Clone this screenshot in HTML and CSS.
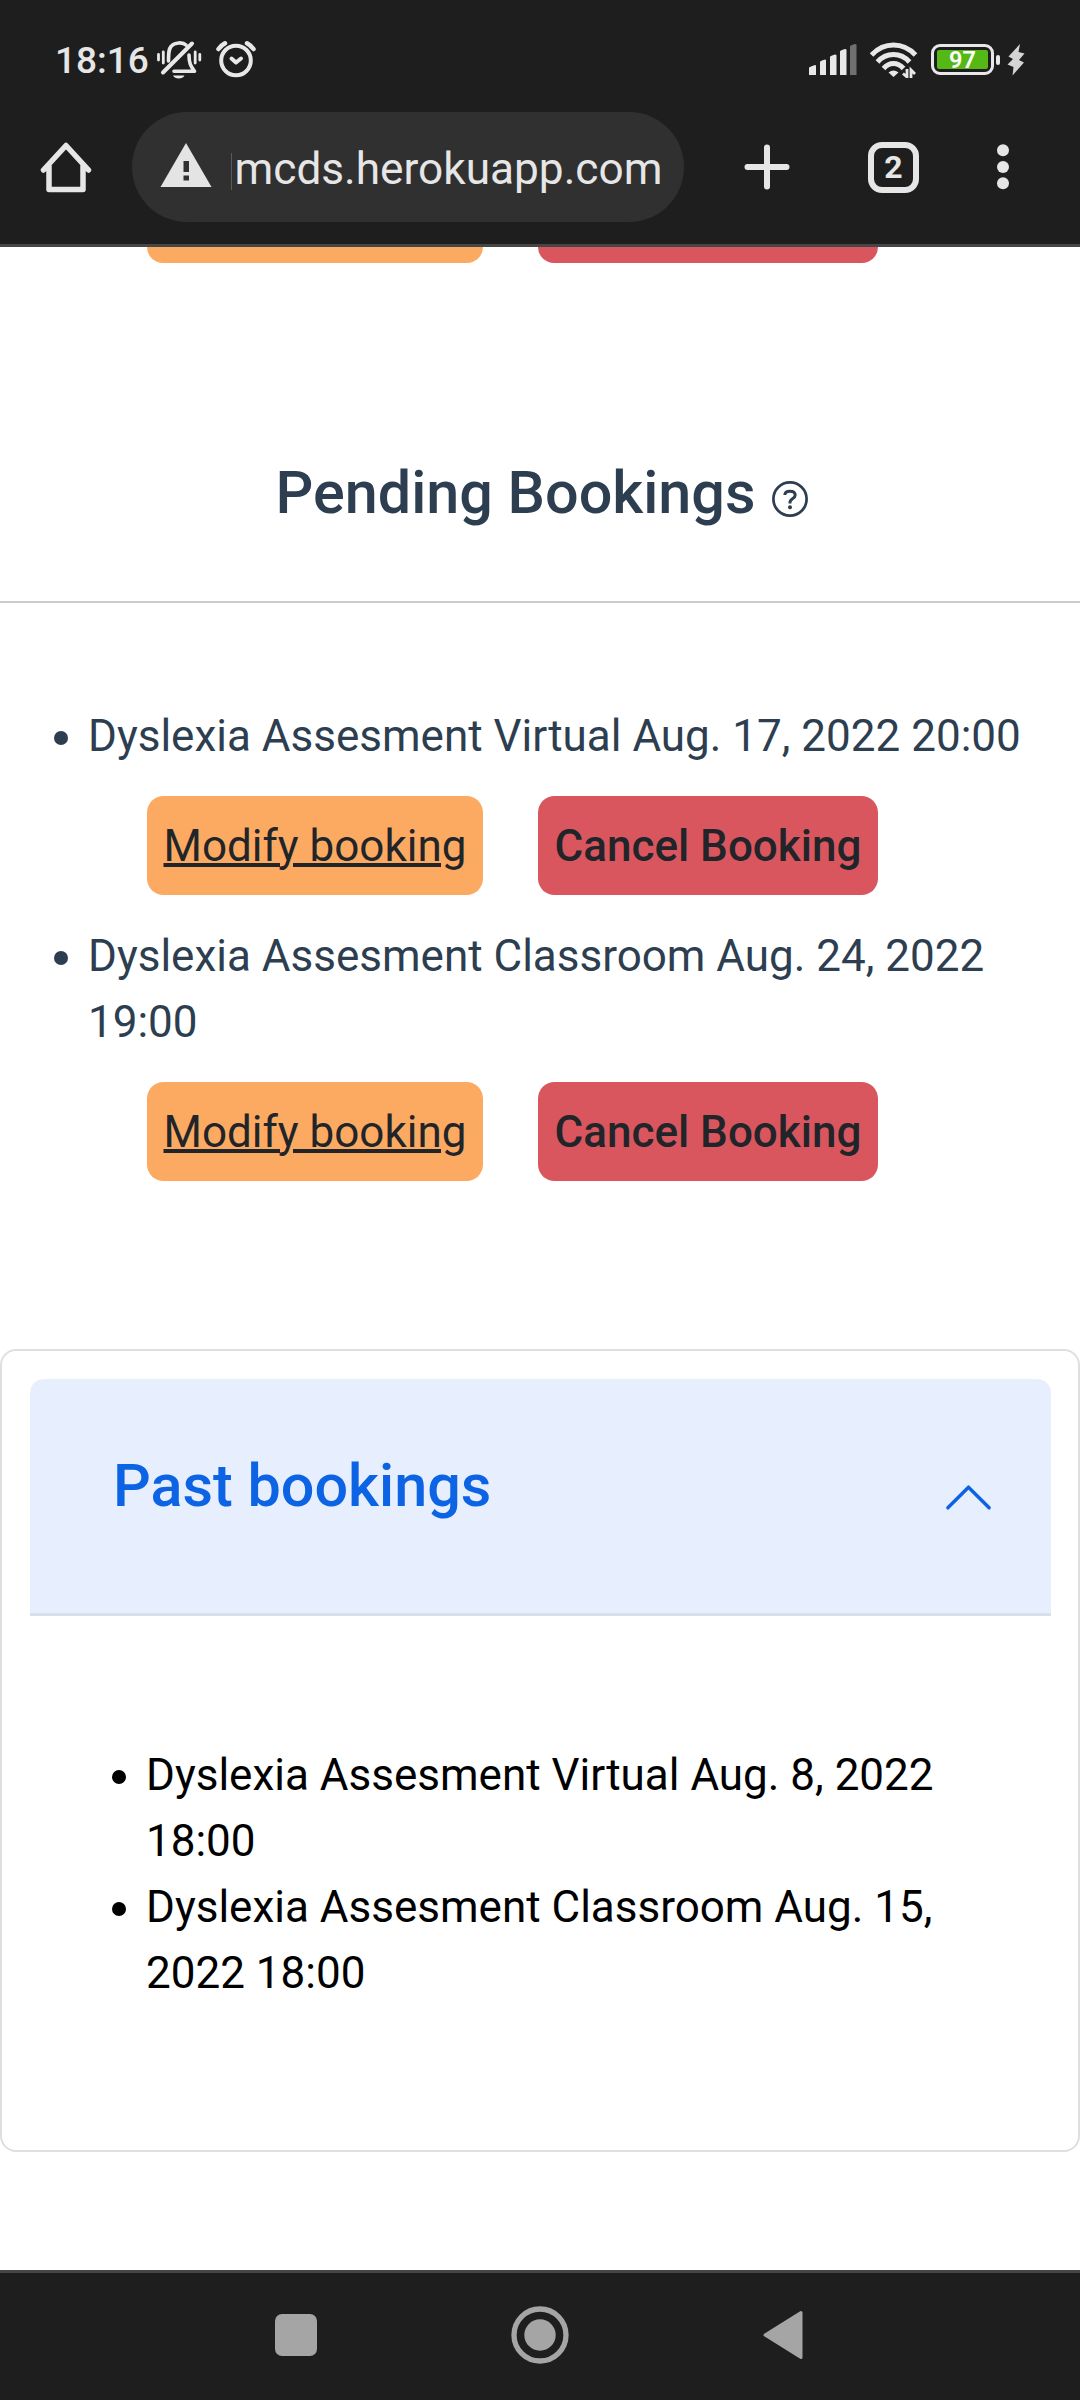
FILE: index.html
```html
<!DOCTYPE html>
<html lang="en">
<head>
<meta charset="utf-8">
<title>Bookings</title>
<link rel="stylesheet" href="styles.css">
</head>
<body>
<header class="chrome">
  <div class="status">
    <span class="clock">18:16</span>
    <svg class="bell" width="46" height="40" viewBox="0 0 46 40" fill="none" stroke="#e8e8e8" stroke-width="3.6" stroke-linecap="round">
      <path d="M30 5C27 2 18.500 2 15 6.500C12.500 9.500 12.700 13 12.500 21"/>
      <path d="M33 15C33 23 34.500 26 38.500 31.300H18" stroke-linejoin="round"/>
      <path d="M36 3.500L7 32.500" stroke-width="4"/>
      <path d="M17 35.500H28.500C27 39.500 18.500 39.500 17 35.500Z" fill="#e8e8e8" stroke="none"/>
      <path d="M2.500 14.500V20M7.300 12V23M39.200 12V23M43.800 14.500V20" stroke-width="2.800"/>
    </svg>
    <svg class="alarm" width="40" height="38" viewBox="0 0 40 38" fill="none" stroke="#e8e8e8" stroke-linecap="round">
      <circle cx="20" cy="20.500" r="14.800" stroke-width="4"/>
      <path d="M2.500 9Q5 5.500 9 3.300M37.500 9Q35 5.500 31 3.300" stroke-width="4.500"/>
      <path d="M15.500 18.500L20 22.500L25 18.500" stroke-width="4" stroke-linejoin="round"/>
    </svg>
    <svg class="signal" width="48" height="34" viewBox="0 0 48 34" fill="#e8e8e8">
      <path d="M0 26Q0 25 2 24.500L6 23Q7 23 7 24V33H0ZM11 20Q11 19 13 18.500L16 17.500Q17 17.500 17 18.500V33H11ZM21 15Q21 14 23 13.500L26 12.500Q27.500 12.500 27.500 13.500V33H21ZM31 9.500Q31 8.500 33 8L36 7Q37.500 7 37.500 8V33H31Z"/>
      <path d="M41 4.500Q41 3.500 43 3L46 2Q47.500 2 47.500 3V33H41Z" fill="#707070"/>
    </svg>
    <svg class="wifi" width="48" height="38" viewBox="0 0 48 38" fill="none" stroke="#e8e8e8" stroke-width="5">
      <path d="M1.500 15Q11 5 23.500 5T45.500 15"/>
      <path d="M7.500 22Q14 14.500 23.500 14.500T39.500 22"/>
      <path d="M13.500 28.500Q18 23.500 23.500 23.500T33.500 28.500"/>
      <path d="M18.500 32.500Q23.500 28.500 28.500 32.500L23.500 37Z" fill="#e8e8e8" stroke="none"/>
      <path d="M37 29V37L33 33.500M41 38V30L45 34" stroke-width="2.800"/>
    </svg>
    <span class="battery"><span class="charge">97</span></span>
    <span class="nub"></span>
    <svg class="bolt" width="18" height="32" viewBox="0 0 18 32"><path d="M13 0L1.500 12.500L6 15L0.500 20.500L6.500 23L5.500 31.500L17 18.500L12 16L17.500 9.500L11.500 8Z" fill="#d4d4d4"/></svg>
  </div>
  <div class="toolbar">
    <svg class="home" width="52" height="52" viewBox="0 0 52 52" fill="none" stroke="#e6e6e6" stroke-width="5.500" stroke-linecap="round" stroke-linejoin="round"><path d="M3.500 29L26 4.500L48.500 29M9 25V48.500H43V25"/></svg>
    <div class="address">
      <svg class="warning" width="52" height="46" viewBox="0 0 52 46"><path d="M26 1L51.500 45H0.500Z" fill="#e4e4e4"/><path d="M23.500 19H29V30H23.500ZM23.500 33.500H29V38.500H23.500Z" fill="#303030"/></svg>
      <span class="caret"></span>
      <span class="url">mcds.herokuapp.com</span>
    </div>
    <svg class="plus" width="46" height="46" viewBox="0 0 46 46" stroke="#e6e6e6" stroke-width="6" stroke-linecap="round"><path d="M23 3.500V42.500M3.500 23H42.500"/></svg>
    <span class="tabs">2</span>
    <svg class="dots" width="12" height="46" viewBox="0 0 12 46" fill="#e6e6e6"><circle cx="6" cy="6.300" r="6"/><circle cx="6" cy="23" r="6"/><circle cx="6" cy="39.300" r="6"/></svg>
  </div>
</header>
<main class="page">
  <div class="actions cut"><span class="btn modify"></span><span class="btn cancel"></span></div>
  <h4 class="title">Pending Bookings
    <svg class="help" width="36" height="36" viewBox="0 0 36 36" fill="none" stroke="#2c3e50"><circle cx="18" cy="18" r="16.600" stroke-width="2.700"/><path d="M12.800 14Q13 10.300 18 10.300T23.200 14Q23.200 16 20.500 17.700T18 21.500V22.500" stroke-width="3"/><circle cx="18" cy="26.300" r="2" fill="#2c3e50" stroke="none"/></svg>
  </h4>
  <ul class="pending">
    <li><p>Dyslexia Assesment Virtual Aug. 17, 2022 20:00</p>
      <div class="actions"><a class="btn modify">Modify booking</a><span class="btn cancel">Cancel Booking</span></div></li>
    <li><p>Dyslexia Assesment Classroom Aug. 24, 2022<br>19:00</p>
      <div class="actions"><a class="btn modify">Modify booking</a><span class="btn cancel">Cancel Booking</span></div></li>
  </ul>
  <section class="card">
    <div class="card-head">
      <h4 class="card-title">Past bookings</h4>
      <svg class="chevron" width="55" height="55" viewBox="0 0 16 16" fill="none" stroke="#0c63e4" stroke-linecap="round" stroke-linejoin="round"><path d="M2 11L8 5L14 11"/></svg>
    </div>
    <ul class="past">
      <li><p>Dyslexia Assesment Virtual Aug. 8, 2022<br>18:00</p></li>
      <li><p>Dyslexia Assesment Classroom Aug. 15,<br>2022 18:00</p></li>
    </ul>
  </section>
</main>
<nav class="nav">
  <span class="recent"></span>
  <svg width="58" height="58" viewBox="0 0 58 58"><circle cx="29" cy="29" r="26" fill="none" stroke="#a5a5a5" stroke-width="5.300"/><circle cx="29" cy="29" r="15.700" fill="#a5a5a5"/></svg>
  <svg class="back" width="40" height="50" viewBox="0 0 40 50"><path d="M2 25L38 2.500V47.500Z" fill="#a5a5a5" stroke="#a5a5a5" stroke-width="3" stroke-linejoin="round"/></svg>
</nav>
</body>
</html>
```
FILE: styles.css
```css
* { box-sizing: border-box; margin: 0; padding: 0; }
body {
  display: flex; flex-direction: column;
  width: 1080px; height: 2400px; overflow: hidden;
  background: #fff; color: #2c3e50;
  font: 400 44px/66px Roboto, sans-serif;
}
svg { display: block; flex: none; }

/* Status bar and browser toolbar */
.chrome { flex: none; height: 247px; background: #1e1e1e; border-bottom: 3px solid #464646; color: #e6e6e6; }
.status { display: flex; align-items: flex-start; height: 112px; padding: 40px 0 0 55px; }
.clock { width: 101px; font-size: 37px; font-weight: 500; line-height: 41px; white-space: nowrap; }
.alarm { margin-left: 14px; }
.signal { margin: 2px 0 0 553px; }
.wifi { margin-left: 13px; }
.battery { width: 63px; height: 31px; margin: 4px 0 0 13px; padding: 3px; border: 3.500px solid #e8e8e8; border-radius: 9px; }
.charge { display: block; height: 19px; border-radius: 2px; background: #55b815; color: #fff; font-size: 23.500px; font-weight: 600; line-height: 20px; text-align: center; }
.nub { width: 4px; height: 10px; margin: 15px 0 0 2px; border-radius: 2px; background: #e8e8e8; }
.bolt { margin: 4px 0 0 7px; }
.toolbar { display: flex; align-items: center; height: 110px; padding-left: 40px; }
.address { display: flex; align-items: center; width: 552px; height: 110px; margin-left: 40px; padding-left: 28px; border-radius: 55px; background: #303030; }
.warning { margin-top: -4px; }
.caret { width: 1px; height: 37px; margin: 8px 0 0 19px; background: #5a5a5a; }
.url { margin: 3px 0 0 2.500px; font-size: 44.200px; white-space: nowrap; }
.plus { margin-left: 60px; }
.tabs { width: 51px; height: 51px; margin-left: 78px; border: 6.500px solid #e6e6e6; border-radius: 14px; font-size: 32px; font-weight: 700; line-height: 39px; text-align: center; }
.dots { margin-left: 78px; }

/* Bookings */
.page { flex: 1; display: flex; flex-direction: column; }
.actions { display: flex; gap: 55px; }
.btn { height: 99px; padding: 16.500px; border-radius: 16.500px; color: #212529; white-space: nowrap; }
.modify { width: 336px; background: #fcaa62; text-decoration: underline; text-decoration-thickness: 4px; }
.cancel { width: 340px; background: #da565f; font-weight: 500; }
.cut { padding-left: 147px; }
.cut .btn { height: 16px; padding: 0; border-radius: 0 0 16px 16px; }
.title { display: flex; justify-content: center; gap: 16px; margin-top: 194px; height: 146px; padding-left: 3px; border-bottom: 2px solid #ccc; font-size: 59.300px; font-weight: 500; line-height: 71px; }
.help { margin-top: 24px; }
ul { list-style: none; }
p { position: relative; white-space: nowrap; }
p::before { content: ""; position: absolute; left: -34px; top: 28px; width: 14px; height: 14px; border-radius: 50%; background: currentColor; }
.pending { padding: 100px 0 0 88px; }
.pending .actions { padding: 27px 0 28px 59px; }
.card { height: 803px; margin-top: 140px; padding: 28px 27px 28px 28px; border: 2px solid #dfdfdf; border-radius: 16px; }
.card-head { display: flex; justify-content: space-between; height: 237px; padding: 71px 55px 0 83px; border-radius: 14px 14px 0 0; background: #e7efff; box-shadow: inset 0 -3px 0 #d9dfe9; color: #0c63e4; }
.card-title { font-size: 59.300px; font-weight: 500; line-height: 71px; }
.chevron { margin-top: 20px; }
.past { padding: 126px 0 0 116px; color: #000; }

/* System navigation */
.nav { flex: none; display: flex; align-items: center; height: 130px; padding: 0 0 3px 275px; background: #1e1e1e; border-top: 3px solid #464646; }
.recent { width: 42px; height: 42px; margin-right: 194px; border-radius: 7px; background: #a5a5a5; }
.back { margin-left: 194px; }
```
